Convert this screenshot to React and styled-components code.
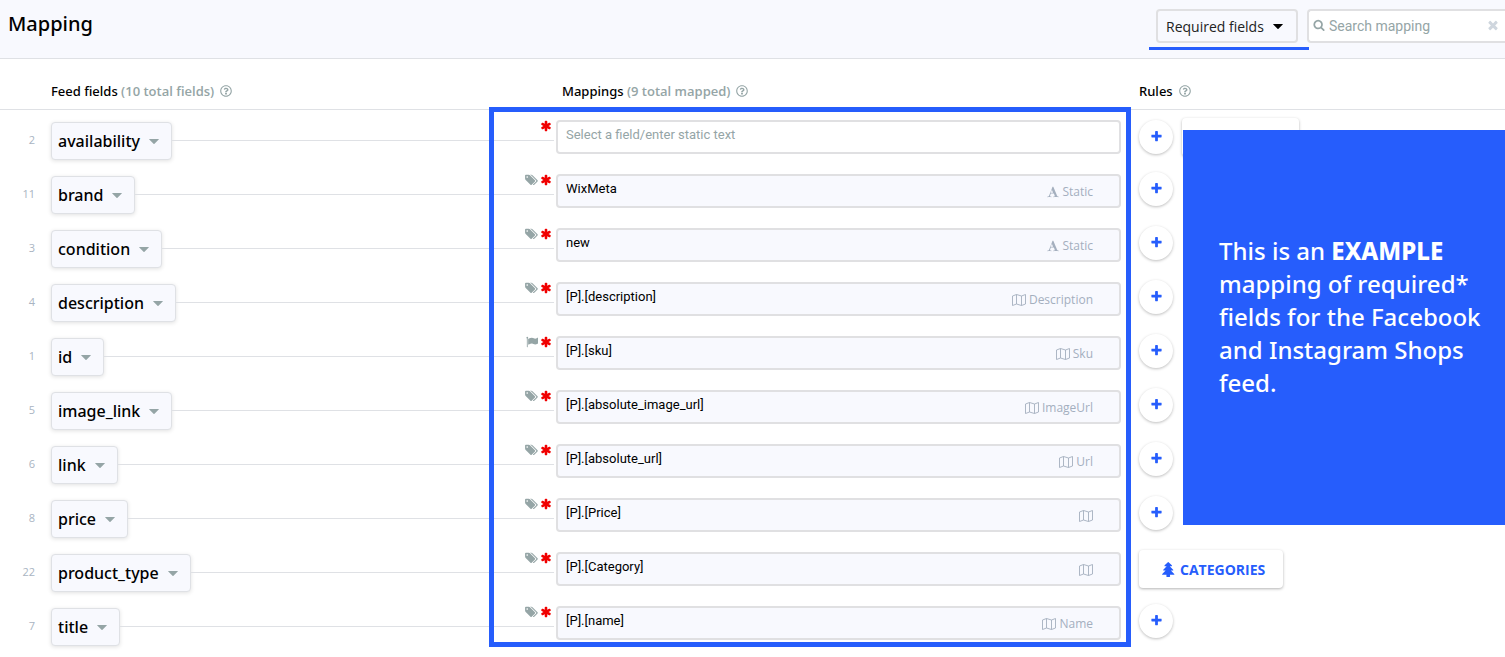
import React, { useState } from "react";
import styled, { createGlobalStyle } from "styled-components";
import { FaRegQuestionCircle } from "react-icons/fa";

const BLUE = "#265dfc";

const rows = [
  { id: 2, field: "availability", value: "", rule: "extra" },
  { id: 11, field: "brand", value: "WixMeta", tag: "Static", icon: "font", mark: "tags" },
  { id: 3, field: "condition", value: "new", tag: "Static", icon: "font", mark: "tags" },
  { id: 4, field: "description", value: "[P].[description]", tag: "Description", icon: "map", mark: "tags" },
  { id: 1, field: "id", value: "[P].[sku]", tag: "Sku", icon: "map", mark: "flag" },
  { id: 5, field: "image_link", value: "[P].[absolute_image_url]", tag: "ImageUrl", icon: "map", mark: "tags" },
  { id: 6, field: "link", value: "[P].[absolute_url]", tag: "Url", icon: "map", mark: "tags" },
  { id: 8, field: "price", value: "[P].[Price]", tag: "", icon: "map", mark: "tags" },
  { id: 22, field: "product_type", value: "[P].[Category]", tag: "", icon: "map", mark: "tags", rule: "categories" },
  { id: 7, field: "title", value: "[P].[name]", tag: "Name", icon: "map", mark: "tags" },
];

const glyphs = {
  plus: "M1600 736v192q0 40-28 68t-68 28h-416v416q0 40-28 68t-68 28h-192q-40 0-68-28t-28-68v-416h-416q-40 0-68-28t-28-68v-192q0-40 28-68t68-28h416v-416q0-40 28-68t68-28h192q40 0 68 28t28 68v416h416q40 0 68 28t28 68z",
  asterisk:
    "M1546 1050q46 26 59.5 77.5t-12.5 97.5l-64 110q-26 46-77.5 59.5t-97.5-12.5l-266-153v307q0 52-38 90t-90 38h-128q-52 0-90-38t-38-90v-307l-266 153q-46 26-97.5 12.5t-77.5-59.5l-64-110q-26-46-12.5-97.5t59.5-77.5l266-154-266-154q-46-26-59.5-77.5t12.5-97.5l64-110q26-46 77.5-59.5t97.5 12.5l266 153v-307q0-52 38-90t90-38h128q52 0 90 38t38 90v307l266-153q46-26 97.5-12.5t77.5 59.5l64 110q26 46 12.5 97.5t-59.5 77.5l-266 154z",
  tree: "M1600 1472q0 26-19 45t-45 19h-462q1 17 6 87.5t5 108.5q0 25-18 42.5t-43 17.5h-320q-25 0-43-17.5t-18-42.5q0-38 5-108.5t6-87.5h-462q-26 0-45-19t-19-45 19-45l402-403h-229q-26 0-45-19t-19-45 19-45l402-403h-197q-26 0-45-19t-19-45 19-45l384-384q19-19 45-19t45 19l384 384q19 19 19 45t-19 45-45 19h-197l402 403q19 19 19 45t-19 45-45 19h-229l402 403q19 19 19 45z",
  search:
    "M1216 832q0-185-131.5-316.5t-316.5-131.5-316.5 131.5-131.5 316.5 131.5 316.5 316.5 131.5 316.5-131.5 131.5-316.5zm512 832q0 52-38 90t-90 38q-54 0-90-38l-343-342q-179 124-399 124-143 0-273.5-55.5t-225-150-150-225-55.5-273.5 55.5-273.5 150-225 225-150 273.5-55.5 273.5 55.5 225 150 150 225 55.5 273.5q0 220-124 399l343 343q37 37 37 90z",
  times:
    "M1490 1322q0 40-28 68l-136 136q-28 28-68 28t-68-28l-294-294-294 294q-28 28-68 28t-68-28l-136-136q-28-28-28-68t28-68l294-294-294-294q-28-28-28-68t28-68l136-136q28-28 68-28t68 28l294 294 294-294q28-28 68-28t68 28l136 136q28 28 28 68t-28 68l-294 294 294 294q28 28 28 68z",
  flag: "M320 256q0 72-64 110v1266q0 13-9.5 22.5t-22.5 9.5h-64q-13 0-22.5-9.5t-9.5-22.5v-1266q-64-38-64-110 0-53 37.5-90.5t90.5-37.5 90.5 37.5 37.5 90.5zm1472 64v763q0 25-12.5 38.5t-39.5 27.5q-215 116-369 116-61 0-123.5-22t-108.5-48-115.5-48-142.5-22q-192 0-464 146-17 9-33 9-26 0-45-19t-19-45v-742q0-32 31-55 21-14 79-43 236-120 421-120 107 0 200 29t219 88q38 19 88 19 54 0 117.5-21t110-47 88-47 54.5-21q26 0 45 19t19 45z",
  font: "M725 559l-170 450q33 0 136.5 2t160.5 2q19 0 57-2-87-253-184-452zm-661 1105l2-79q23-7 56-12.5t57-10.5 49.5-14.5 44.5-29 31-50.5l237-616 280-724h128q8 14 11 21l205 480q33 78 106 257.5t114 274.5q15 34 58 144.5t72 168.5q20 45 35 57 19 15 88 29.5t84 20.5q6 38 6 57 0 5-.5 13.5t-.5 12.5q-63 0-190-8t-191-8q-76 0-215 7t-178 8q0-43 4-78l131-28q1 0 12.5-2.5t15.5-3.5 14.5-4.5 15-6.5 11-8 9-11 2.5-14q0-16-31-96.5t-72-177.5-42-100l-450-2q-26 58-76.5 195.5t-50.5 162.5q0 22 14 37.5t43.5 24.5 48.5 13.5 57 8.5 41 4q1 19 1 58 0 9-2 27-58 0-174.5-10t-174.5-10q-8 0-26.5 4t-21.5 4q-80 14-188 14z",
};

const Glyph = ({ name, size }) => (
  <svg width={size} height={size} viewBox="0 0 1792 1792" fill="currentColor" aria-hidden="true">
    <path d={glyphs[name]} />
  </svg>
);

const TagsIcon = () => (
  <svg width="13" height="12" viewBox="0 0 1920 1792" fill="currentColor" aria-hidden="true">
    <path d="M448 448q0-53-37.5-90.5t-90.5-37.5-90.5 37.5-37.5 90.5 37.5 90.5 90.5 37.5 90.5-37.5 37.5-90.5zm1067 576q0 53-37 90l-491 492q-39 37-91 37-53 0-90-37l-715-716q-38-37-64.5-101t-26.5-117v-416q0-52 38-90t90-38h416q53 0 117 26.5t102 64.5l715 714q37 39 37 91zm384 0q0 53-37 90l-491 492q-39 37-91 37-36 0-59-14t-53-45l470-470q37-37 37-90 0-52-37-91l-715-714q-38-38-102-64.5t-117-26.5h224q53 0 117 26.5t102 64.5l715 714q37 39 37 91z" />
  </svg>
);

const Caret = () => (
  <svg width="10" height="5" viewBox="0 0 10 5" fill="currentColor" aria-hidden="true">
    <path d="M0.5 0h9q0.7 0 0.2 0.6L5.5 4.7q-0.5 0.5-1 0L0.3 0.6Q-0.2 0 0.5 0z" />
  </svg>
);

const MapIcon = () => (
  <svg width="14" height="12" viewBox="0 0 14 12" fill="none" stroke="currentColor" strokeWidth="0.9" aria-hidden="true">
    <path d="M0.5 2L4.5 0.5l5 1.5 4-1.5V10l-4 1.5-5-1.5-4 1.5zM4.5 0.5V10M9.5 2v9.5" />
  </svg>
);

const App = () => {
  const [filter, setFilter] = useState("required");
  const [search, setSearch] = useState("");

  return (
    <Page>
      <GlobalStyle />
      <TopBar>
        <Title>Mapping</Title>
        <Filter>
          <FilterSelect
            aria-label="Filter fields"
            value={filter}
            onChange={(e) => setFilter(e.target.value)}
          >
            <option value="required">Required fields</option>
            <option value="all">All fields</option>
          </FilterSelect>
          <FilterCaret>
            <Caret />
          </FilterCaret>
        </Filter>
        <SearchBox>
          <Glyph name="search" size={12} />
          <SearchInput
            aria-label="Search mapping"
            placeholder="Search mapping"
            value={search}
            onChange={(e) => setSearch(e.target.value)}
          />
          <ClearButton aria-label="Clear search" onClick={() => setSearch("")}>
            <Glyph name="times" size={14} />
          </ClearButton>
        </SearchBox>
      </TopBar>
      <HeadRow>
        <span />
        <Heading>
          Feed fields <Count>(10 total fields)</Count>
          <FaRegQuestionCircle />
        </Heading>
        <Heading $indent={6}>
          Mappings <Count>(9 total mapped)</Count>
          <FaRegQuestionCircle />
        </Heading>
        <Heading $indent={18}>
          Rules
          <FaRegQuestionCircle />
        </Heading>
      </HeadRow>
      <Body>
        {rows.map((row) => (
          <MappingRow key={row.id} row={row} />
        ))}
        <Overlay>
          <Frame />
          <Callout>
            This is an <strong>EXAMPLE</strong> mapping of required* fields for the Facebook and
            Instagram Shops feed.
          </Callout>
        </Overlay>
      </Body>
    </Page>
  );
};

const MappingRow = ({ row }) => {
  const [value, setValue] = useState(row.value);

  return (
    <Row>
      <Position>{row.id}</Position>
      <Feed>
        <FieldButton>
          {row.field}
          <Caret />
        </FieldButton>
        <Connector>
          {row.mark === "tags" && <TagsIcon />}
          {row.mark === "flag" && <Glyph name="flag" size={12} />}
          <Required>
            <Glyph name="asterisk" size={12} />
          </Required>
        </Connector>
      </Feed>
      <MappingBox $filled={row.value !== ""}>
        <MappingInput
          aria-label={row.field}
          placeholder="Select a field/enter static text"
          value={value}
          onChange={(e) => setValue(e.target.value)}
        />
        {row.icon && (
          <Source>
            {row.icon === "font" ? <Glyph name="font" size={12} /> : <MapIcon />}
            {row.tag}
          </Source>
        )}
      </MappingBox>
      <Rules>
        {row.rule === "categories" ? (
          <RuleButton>
            <Glyph name="tree" size={15} />
            CATEGORIES
          </RuleButton>
        ) : (
          <AddButton aria-label={"Add rule to " + row.field}>
            <Glyph name="plus" size={13} />
          </AddButton>
        )}
        {row.rule === "extra" && <EmptyRule />}
      </Rules>
    </Row>
  );
};

export default App;

const GlobalStyle = createGlobalStyle`
  * {
    box-sizing: border-box;
  }
  body {
    margin: 0;
    background: #fff;
    font-family: "Open Sans", sans-serif;
    color: #000;
  }
  button, input, select {
    font: inherit;
    color: inherit;
    outline: none;
  }
  svg {
    flex-shrink: 0;
  }
`;
const Page = styled.main`
  min-height: 100vh;
  overflow: hidden;
`;
const TopBar = styled.header`
  display: flex;
  align-items: flex-start;
  height: 59px;
  padding: 9px 0 0 8px;
  background: #f8f9fe;
  border-bottom: 1px solid #dfe1e5;
`;
const Title = styled.h1`
  flex: 1;
  margin: 0;
  font-family: "Noto Sans", sans-serif;
  font-size: 20px;
  line-height: 30px;
  font-weight: 500;
`;
const Filter = styled.div`
  position: relative;
  width: 142px;
  margin-right: 9px;

  &::after {
    content: "";
    position: absolute;
    left: -7px;
    right: -11px;
    top: 38px;
    height: 3px;
    background: ${BLUE};
  }
`;
const FilterSelect = styled.select`
  width: 100%;
  height: 34px;
  padding: 0 8px;
  appearance: none;
  border: 2px solid #e0e0e2;
  border-radius: 4px;
  background: transparent;
  font-size: 14px;
  color: #222;
`;
const FilterCaret = styled.span`
  position: absolute;
  right: 15px;
  top: 15px;
  display: flex;
  pointer-events: none;
`;
const SearchBox = styled.div`
  display: flex;
  align-items: center;
  width: 198px;
  height: 34px;
  padding: 0 5px 2px 4px;
  border: 2px solid #e0e0e2;
  border-right: none;
  border-radius: 4px 0 0 4px;
  background: #fff;
  color: #95a5a6;
`;
const SearchInput = styled.input`
  flex: 1;
  min-width: 0;
  padding: 2px 4px 0;
  border: none;
  background: none;
  font-family: Roboto, sans-serif;
  font-size: 14px;

  &::placeholder {
    color: #95a5a6;
    opacity: 1;
  }
`;
const ClearButton = styled.button`
  display: flex;
  padding: 0;
  border: none;
  background: none;
  color: #cfd6de;
`;
const HeadRow = styled.div`
  display: grid;
  grid-template-columns: 51px 505fr 565fr 384fr;
  align-items: center;
  height: 51px;
  padding-top: 14px;
  border-bottom: 1px solid #dfe1e5;
`;
const Heading = styled.h2`
  display: flex;
  align-items: center;
  margin: 0;
  padding-left: ${(props) => props.$indent || 0}px;
  font-family: "Noto Sans", sans-serif;
  font-size: 13px;
  line-height: 18px;
  font-weight: 500;
  white-space: pre;

  svg {
    margin-left: 6px;
    font-size: 12px;
    color: #95a5a6;
  }
`;
const Count = styled.span`
  font-family: "Open Sans", sans-serif;
  font-weight: 600;
  color: #95a5a6;
`;
const Body = styled.div`
  position: relative;
  padding-top: 4px;
`;
const Row = styled.div`
  display: grid;
  grid-template-columns: 51px 505fr 565fr 384fr;
  align-items: start;
  height: 54px;
`;
const Position = styled.span`
  padding-right: 16px;
  font-size: 11px;
  line-height: 52px;
  text-align: right;
  color: #a9b4c2;
`;
const Feed = styled.div`
  display: flex;
  padding-right: 2px;
`;
const FieldButton = styled.button`
  display: flex;
  align-items: center;
  gap: 9px;
  height: 38px;
  margin-top: 8px;
  padding: 0 12px 0 6px;
  border: 1px solid #dfe1e5;
  border-radius: 4px;
  background: #f8f9fe;
  box-shadow: 0 1px 4px rgba(0, 0, 0, 0.12);
  font-family: "Noto Sans", sans-serif;
  font-size: 16px;
  font-weight: 500;

  svg {
    color: #95a5a6;
  }
`;
const Connector = styled.div`
  flex: 1;
  display: flex;
  align-items: center;
  justify-content: flex-end;
  gap: 2px;
  height: 27px;
  padding: 0 2px 2px 0;
  border-bottom: 1px solid #dfe1e5;
  color: #95a5a6;
`;
const Required = styled.span`
  display: flex;
  color: #f00000;
`;
const MappingBox = styled.div`
  display: flex;
  align-items: center;
  height: 34px;
  margin-top: 6px;
  padding-right: 26px;
  border: 2px solid #e0e0e2;
  border-radius: 4px;
  background: ${(props) => (props.$filled ? "#f8f9fe" : "#fff")};
`;
const MappingInput = styled.input`
  flex: 1;
  min-width: 0;
  height: 30px;
  padding: 0 8px 6px;
  border: none;
  background: none;
  font-family: Roboto, sans-serif;
  font-size: 13px;

  &::placeholder {
    color: #95a5a6;
    opacity: 1;
  }
`;
const Source = styled.span`
  display: flex;
  align-items: center;
  gap: 3px;
  padding-top: 2px;
  font-size: 12px;
  line-height: 18px;
  color: #a4afbe;
`;
const Rules = styled.div`
  display: flex;
  align-items: center;
  gap: 9px;
  padding: 4px 0 0 18px;
`;
const AddButton = styled.button`
  display: flex;
  align-items: center;
  justify-content: center;
  width: 34px;
  height: 34px;
  padding: 0 0 2px;
  border: none;
  border-radius: 50%;
  background: #fff;
  box-shadow: 0 1px 3px rgba(0, 0, 0, 0.26);
  color: ${BLUE};
`;
const RuleButton = styled.button`
  display: flex;
  align-items: center;
  gap: 4px;
  height: 38px;
  padding: 0 18px 0 22px;
  border: none;
  border-radius: 4px;
  background: #fff;
  box-shadow: 0 1px 3px rgba(0, 0, 0, 0.3);
  font-size: 14px;
  font-weight: 700;
  color: ${BLUE};
`;
const EmptyRule = styled.div`
  width: 117px;
  height: 38px;
  border-radius: 4px;
  background: #fff;
  box-shadow: 0 1px 3px rgba(0, 0, 0, 0.3);
`;
const Overlay = styled.div`
  position: absolute;
  inset: 0;
  display: grid;
  grid-template-columns: 51px 505fr 565fr 384fr;
  pointer-events: none;
`;
const Frame = styled.div`
  grid-column: 3;
  margin: -3px -10px 7px -67px;
  border: 5px solid ${BLUE};
`;
const Callout = styled.p`
  grid-column: 4;
  align-self: start;
  min-height: 395px;
  margin: 20px 0 0 62px;
  padding: 104px 16px 0 36px;
  background: ${BLUE};
  color: #fff;
  font-family: "Noto Sans", sans-serif;
  font-size: 24px;
  line-height: 33px;
  font-weight: 500;

  strong {
    font-weight: 800;
  }
`;
